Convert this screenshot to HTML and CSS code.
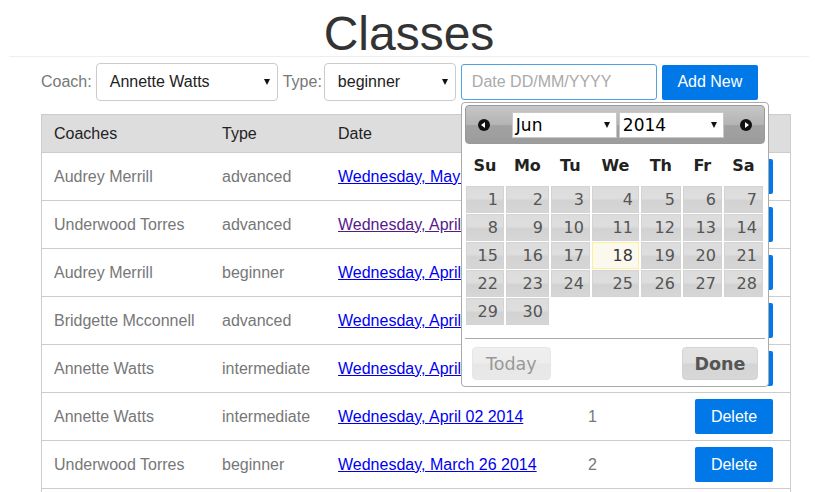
FILE: index.html
```html
<!DOCTYPE html>
<html lang="en">
<head>
<meta charset="utf-8">
<title>Classes</title>
<link rel="stylesheet" href="styles.css">
</head>
<body>
<header class="title-bar"><h1>Classes</h1></header>
<main class="content">
  <form class="filters">
    <label class="lbl lbl-coach">Coach:</label>
    <div class="select select-coach"><span>Annette Watts</span><i class="caret"></i></div>
    <label class="lbl lbl-type">Type:</label>
    <div class="select select-type"><span>beginner</span><i class="caret"></i></div>
    <div class="date-wrap">
      <input class="date-input" type="text" placeholder="Date DD/MM/YYYY" autofocus>
      <div class="datepicker">
        <div class="dp-head">
          <span class="dp-nav dp-prev"></span>
          <div class="dp-selects">
            <div class="dp-select"><span>Jun</span><i class="caret"></i></div>
            <div class="dp-select"><span>2014</span><i class="caret"></i></div>
          </div>
          <span class="dp-nav dp-next"></span>
        </div>
        <div class="dp-grid">
          <div class="dow">Su</div><div class="dow">Mo</div><div class="dow">Tu</div><div class="dow">We</div><div class="dow">Th</div><div class="dow">Fr</div><div class="dow">Sa</div>
          <a class="day">1</a><a class="day">2</a><a class="day">3</a><a class="day">4</a><a class="day">5</a><a class="day">6</a><a class="day">7</a>
          <a class="day">8</a><a class="day">9</a><a class="day">10</a><a class="day">11</a><a class="day">12</a><a class="day">13</a><a class="day">14</a>
          <a class="day">15</a><a class="day">16</a><a class="day">17</a><a class="day today">18</a><a class="day">19</a><a class="day">20</a><a class="day">21</a>
          <a class="day">22</a><a class="day">23</a><a class="day">24</a><a class="day">25</a><a class="day">26</a><a class="day">27</a><a class="day">28</a>
          <a class="day">29</a><a class="day">30</a>
        </div>
        <div class="dp-buttons">
          <button type="button" class="dp-btn dp-today">Today</button>
          <button type="button" class="dp-btn dp-done">Done</button>
        </div>
      </div>
    </div>
    <button type="button" class="btn-primary btn-add">Add New</button>
  </form>

  <table class="classes">
    <colgroup>
      <col class="c-coach"><col class="c-type"><col class="c-date"><col class="c-num"><col class="c-act">
    </colgroup>
    <thead>
      <tr><th>Coaches</th><th>Type</th><th>Date</th><th>Students</th><th></th></tr>
    </thead>
    <tbody>
      <tr><td>Audrey Merrill</td><td>advanced</td><td><a href="#">Wednesday, May 07 2014</a></td><td>3</td><td><button type="button" class="btn-primary btn-del">Delete</button></td></tr>
      <tr><td>Underwood Torres</td><td>advanced</td><td><a href="#" class="visited">Wednesday, April 30 2014</a></td><td>2</td><td><button type="button" class="btn-primary btn-del">Delete</button></td></tr>
      <tr><td>Audrey Merrill</td><td>beginner</td><td><a href="#">Wednesday, April 23 2014</a></td><td>1</td><td><button type="button" class="btn-primary btn-del">Delete</button></td></tr>
      <tr><td>Bridgette Mcconnell</td><td>advanced</td><td><a href="#">Wednesday, April 16 2014</a></td><td>4</td><td><button type="button" class="btn-primary btn-del">Delete</button></td></tr>
      <tr><td>Annette Watts</td><td>intermediate</td><td><a href="#">Wednesday, April 09 2014</a></td><td>2</td><td><button type="button" class="btn-primary btn-del">Delete</button></td></tr>
      <tr><td>Annette Watts</td><td>intermediate</td><td><a href="#">Wednesday, April 02 2014</a></td><td>1</td><td><button type="button" class="btn-primary btn-del">Delete</button></td></tr>
      <tr><td>Underwood Torres</td><td>beginner</td><td><a href="#">Wednesday, March 26 2014</a></td><td>2</td><td><button type="button" class="btn-primary btn-del">Delete</button></td></tr>
      <tr><td>Bridgette Mcconnell</td><td>beginner</td><td><a href="#">Wednesday, March 19 2014</a></td><td>3</td><td><button type="button" class="btn-primary btn-del">Delete</button></td></tr>
    </tbody>
  </table>
</main>
</body>
</html>
```
FILE: styles.css
```css
html, body { overflow: hidden; }
body {
  margin: 0;
  font-family: "Liberation Sans", Arial, sans-serif;
  font-size: 16px;
  color: #333;
  background: #fff;
}

.title-bar {
  width: 800px;
  margin-left: 9px;
  padding-top: 12px;
  border-bottom: 1px solid #eee;
  text-align: center;
}
.title-bar h1 {
  margin: 0;
  font-size: 48px;
  line-height: 44px;
  font-weight: normal;
  color: #333;
}

.content {
  padding-left: 41px;
  width: 750px;
}

/* filter row */
.filters {
  display: flex;
  align-items: center;
  margin: 6px 0 0;
  height: 38px;
}
.lbl { color: #777; }
.lbl-coach { margin-right: 4px; }
.lbl-type { margin-left: 5px; margin-right: 2px; }

.select {
  box-sizing: border-box;
  height: 38px;
  border: 1px solid #ccc;
  border-radius: 4px;
  background: #fff;
  padding: 0 7px 0 13px;
  display: flex;
  align-items: center;
  justify-content: space-between;
  color: #222;
}
.select-coach { width: 182px; }
.select-type { width: 132px; }

.caret {
  width: 0;
  height: 0;
  border-left: 3.5px solid transparent;
  border-right: 3.5px solid transparent;
  border-top: 6px solid #111;
}

.date-wrap {
  position: relative;
  margin-left: 5px;
  width: 196px;
  height: 36px;
}
.date-input {
  box-sizing: border-box;
  width: 196px;
  height: 36px;
  margin: 0;
  border: 1px solid #4ea3e8;
  border-radius: 3px;
  padding: 0 10px;
  font: 16px "Liberation Sans", Arial, sans-serif;
  color: #333;
  outline: none;
  caret-color: #000;
}
.date-input::placeholder { color: #aaa; }

.btn-primary {
  border: none;
  border-radius: 2px;
  background: #0078e7;
  color: #fff;
  font: 16px "Liberation Sans", Arial, sans-serif;
  padding: 0;
  cursor: pointer;
}
.btn-add {
  margin-left: 5px;
  width: 96px;
  height: 35px;
}

/* table */
.classes {
  margin-top: 13px;
  width: 750px;
  table-layout: fixed;
  border-spacing: 0;
  border-left: 1px solid #ccc;
  border-right: 1px solid #ccc;
}
.c-coach { width: 168px; }
.c-type { width: 116px; }
.c-date { width: 250px; }
.c-num { width: 107px; }
.c-act { width: 107px; }

.classes th {
  box-sizing: border-box;
  height: 38px;
  padding: 0 12px;
  background: #ddd;
  border-top: 1px solid #ccc;
  text-align: left;
  font-weight: normal;
  color: #222;
  white-space: nowrap;
}
.classes td {
  box-sizing: border-box;
  height: 48px;
  padding: 0 12px;
  border-top: 1px solid #ccc;
  color: #777;
  white-space: nowrap;
}
.classes a { color: #0000ee; }
.classes a.visited { color: #551a8b; }
.btn-del {
  width: 78px;
  height: 35px;
  display: block;
}

/* datepicker */
.datepicker {
  position: absolute;
  top: 38px;
  left: 0;
  z-index: 5;
  box-sizing: border-box;
  width: 308px;
  padding: 2px 3px 6px;
  background: #fff;
  border: 1px solid #aaa;
  border-radius: 4px;
  font-family: "DejaVu Sans", Verdana, sans-serif;
}
.dp-head {
  box-sizing: border-box;
  height: 39px;
  border: 1px solid #9a9a9a;
  border-radius: 4px;
  background: linear-gradient(to bottom, #c6c6c6 0%, #b4b4b4 50%, #a2a2a2 52%, #9c9c9c 100%);
  display: flex;
  align-items: center;
  justify-content: space-between;
  padding: 0 12px 0 12px;
}
.dp-nav {
  position: relative;
  width: 12px;
  height: 12px;
  border-radius: 50%;
  background: #111;
}
.dp-prev::after, .dp-next::after {
  content: "";
  position: absolute;
  top: 3px;
  width: 0;
  height: 0;
  border-top: 3px solid transparent;
  border-bottom: 3px solid transparent;
}
.dp-prev::after { left: 3px; border-right: 4px solid #fff; }
.dp-next::after { left: 5px; border-left: 4px solid #fff; }

.dp-selects { display: flex; gap: 2px; margin-left: 6px; }
.dp-select {
  box-sizing: border-box;
  width: 105px;
  height: 26px;
  background: #fff;
  border: 1px solid #c8c8c8;
  padding: 0 6px 0 3px;
  display: flex;
  align-items: center;
  justify-content: space-between;
  font-size: 17px;
  color: #000;
}

.dp-grid {
  display: grid;
  grid-template-columns: 38px 43px 39px 47px 40px 39px 39px;
  grid-template-rows: 41px repeat(5, 27px);
  column-gap: 2px;
  row-gap: 1px;
  margin-left: 1px;
}
.dow {
  display: flex;
  align-items: center;
  justify-content: center;
  padding-top: 1px;
  font-weight: bold;
  font-size: 16px;
  color: #222;
}
.day {
  box-sizing: border-box;
  border: 1px solid #d3d3d3;
  background: linear-gradient(to bottom, #dcdcdc 0%, #dedede 45%, #d2d2d2 55%, #d6d6d6 100%);
  color: #555;
  font-size: 16px;
  text-align: right;
  padding-right: 5px;
  line-height: 25px;
}
.day.today {
  border-color: #fcefa1;
  background: #fbf9ee;
  color: #363636;
}

.dp-buttons {
  margin-top: 13px;
  border-top: 1px solid #aaa;
  padding: 8px 7px 0;
  display: flex;
  justify-content: space-between;
}
.dp-btn {
  box-sizing: border-box;
  height: 33px;
  border: 1px solid #d3d3d3;
  border-radius: 4px;
  background: linear-gradient(to bottom, #e2e2e2 0%, #e0e0e0 48%, #d4d4d4 52%, #d8d8d8 100%);
  font-family: "DejaVu Sans", Verdana, sans-serif;
  font-size: 17.5px;
  color: #555;
  padding: 0;
}
.dp-today {
  width: 79px;
  opacity: 0.55;
  color: #444;
}
.dp-done {
  width: 76px;
  font-weight: bold;
}
```
